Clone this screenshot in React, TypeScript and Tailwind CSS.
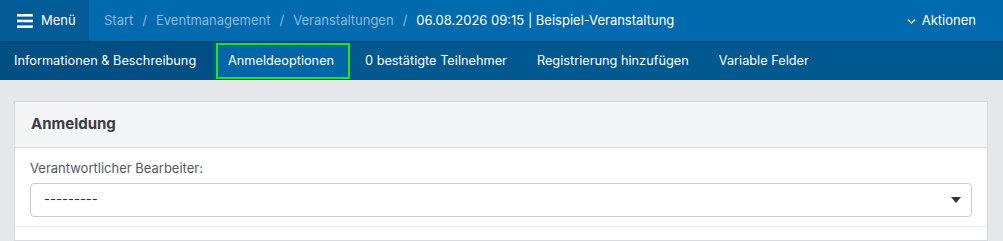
import { ChevronDown } from "lucide-react";

const tabs = [
  { label: "Informationen & Beschreibung", kind: "first" },
  { label: "Anmeldeoptionen", kind: "active" },
  { label: "0 bestätigte Teilnehmer", kind: "" },
  { label: "Registrierung hinzufügen", kind: "" },
  { label: "Variable Felder", kind: "" },
];

export default function App() {
  return (
    <div className="min-h-[241px] bg-[#e6e7ea] text-[13px]" style={{ fontFamily: "Inter, 'Noto Sans', sans-serif" }}>
      {/* Top bar */}
      <div className="relative z-10 flex h-[41px] items-center bg-[#006aae] text-white shadow-[0_1px_2px_rgba(0,0,0,0.25)]">
        <div className="flex h-full w-[89px] items-center gap-[8px] bg-[#005b96] pl-[17px]">
          <svg width="16" height="14" viewBox="0 0 16 14" fill="white">
            <rect x="0" y="0" width="16" height="2.6" />
            <rect x="0" y="5.7" width="16" height="2.6" />
            <rect x="0" y="11.4" width="16" height="2.6" />
          </svg>
          <span>Menü</span>
        </div>
        <div className="flex items-center pl-[15px] pt-[1px]">
          <span className="text-[#8fb7da]">Start</span>
          <span className="px-[9px] text-[#8fb7da]">/</span>
          <span className="text-[#8fb7da]">Eventmanagement</span>
          <span className="px-[9px] text-[#8fb7da]">/</span>
          <span className="text-[#8fb7da]">Veranstaltungen</span>
          <span className="px-[9px] text-[#8fb7da]">/</span>
          <span>06.08.2026 09:15 | Beispiel-Veranstaltung</span>
        </div>
        <div className="ml-auto flex items-center gap-[4px] pr-[27px] pt-[1px]">
          <ChevronDown size={13} strokeWidth={2.5} />
          <span>Aktionen</span>
        </div>
      </div>

      {/* Tab bar */}
      <div className="flex h-[39px] bg-[#005891] text-[12.75px] text-white">
        {tabs.map((t) => (
          <div
            key={t.label}
            className={
              t.kind === "first"
                ? "flex w-[213px] items-center bg-[#004f84] pl-[14px]"
                : t.kind === "active"
                ? "mb-[1px] ml-[3px] mt-[2px] flex w-[134px] items-center bg-[#0066a8] pl-[12px] outline-2 outline-offset-[-2px] outline-[#1ee61e]"
                : "flex items-center px-[15px] first-of-type:pl-[14px]"
            }
          >
            {t.label}
          </div>
        ))}
      </div>

      {/* Content */}
      <div className="pl-[14px] pr-[15px] pt-[21px]">
        <div className="border border-[#d8dadd] bg-white">
          <div className="flex h-[46px] items-center border-b border-[#d8dadd] bg-[#f4f5f7] px-[16px]">
            <span className="text-[15px] font-bold text-[#3a3d42]">Anmeldung</span>
          </div>
          <div className="px-[15px] pb-[9px] pt-[11px]">
            <div className="text-[#55585d]">Verantwortlicher Bearbeiter:</div>
            <div className="mt-[4px] flex h-[34px] items-center justify-between rounded-[4px] border border-[#c9cbce] bg-white pl-[13px] pr-[10px] text-[#333]">
              <span>---------</span>
              <svg width="10" height="6" viewBox="0 0 10 6" fill="#333">
                <polygon points="0,0 10,0 5,6" />
              </svg>
            </div>
          </div>
          <div className="h-[14px] border-t border-[#e8e9eb]" />
        </div>
      </div>
    </div>
  );
}
